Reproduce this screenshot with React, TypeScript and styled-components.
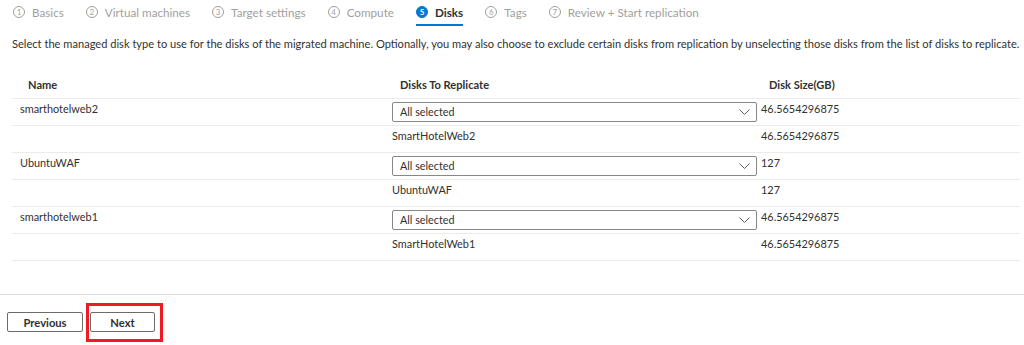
import styled, { createGlobalStyle } from "styled-components";

const GlobalStyle = createGlobalStyle`
    body {
        margin:0;
        background:#fff;
        font-family: Lato, "Open Sans", sans-serif;
        color:#323130;
    }
`;

const Page = styled.div`
    width:1024px;
    height:345px;
    display:flex;
    flex-direction:column;
    overflow:hidden;
`;

const Tabs = styled.div`
    display:flex;
    align-items:stretch;
    gap:22px;
    padding-left:13px;
    height:26px;
`;

const Tab = styled.div<{ $active?: boolean }>`
    display:flex;
    align-items:center;
    gap:7px;
    font-size:11.7px;
    color:${p => p.$active ? "#323130" : "#a19f9d"};
    font-weight:${p => p.$active ? 700 : 400};
    border-bottom:2px solid ${p => p.$active ? "#0078d4" : "transparent"};
`;

const StepNum = styled.span<{ $active?: boolean }>`
    width:12px;
    height:12px;
    box-sizing:border-box;
    border-radius:50%;
    border:1px solid ${p => p.$active ? "#0078d4" : "#a19f9d"};
    background:${p => p.$active ? "#0078d4" : "transparent"};
    color:${p => p.$active ? "#fff" : "#a19f9d"};
    font-size:8px;
    font-weight:${p => p.$active ? 700 : 400};
    display:flex;
    align-items:center;
    justify-content:center;
    line-height:1;
`;

const Description = styled.p`
    margin:10px 0 0 12px;
    font-size:11.1px;
    line-height:16px;
    white-space:nowrap;
`;

const Table = styled.div`
    margin:18px 4px 0 12px;
    display:grid;
    grid-template-columns:372px 369px 1fr;
`;

const HeadCell = styled.div`
    height:28px;
    display:flex;
    align-items:center;
    padding-left:16px;
    font-size:11.1px;
    font-weight:700;
    border-bottom:1px solid #edebe9;
`;

const Cell = styled.div`
    box-sizing:content-box;
    padding:2px 0 0 8px;
    height:24px;
    font-size:10.9px;
    line-height:16px;
    border-bottom:1px solid #edebe9;
`;

const Dropdown = styled.div`
    margin-top:1px;
    height:20px;
    box-sizing:border-box;
    width:365px;
    border:1px solid #8a8886;
    border-radius:2px;
    display:flex;
    align-items:center;
    justify-content:space-between;
    padding:0 6px 0 7px;
    font-size:10.8px;
`;

const Footer = styled.div`
    margin-top:33px;
    border-top:1px solid #e1dfdd;
    padding:17px 0 0 7px;
    display:flex;
    gap:7px;
    position:relative;
`;

const Button = styled.button<{ $w: number }>`
    width:${p => p.$w}px;
    height:20px;
    box-sizing:border-box;
    border:1px solid #6d6b69;
    border-radius:2px;
    background:#fff;
    font-family:inherit;
    font-size:11.2px;
    font-weight:700;
    color:#323130;
    padding:0;
`;

const Highlight = styled.div`
    position:absolute;
    left:86px;
    top:8px;
    width:77px;
    height:39px;
    box-sizing:border-box;
    border:3px solid #ed1c24;
`;

const steps = ["Basics", "Virtual machines", "Target settings", "Compute", "Disks", "Tags", "Review + Start replication"];

const machines = [
    { name: "smarthotelweb2", disk: "SmartHotelWeb2", size: "46.5654296875" },
    { name: "UbuntuWAF", disk: "UbuntuWAF", size: "127" },
    { name: "smarthotelweb1", disk: "SmartHotelWeb1", size: "46.5654296875" },
];

function Chevron() {
    return (
        <svg width="11" height="6" viewBox="0 0 11 6">
            <path d="M0.5 0.5 L5.5 5.5 L10.5 0.5" fill="none" stroke="#605e5c" strokeWidth="1" />
        </svg>
    );
}

export default function App() {
    return (
        <Page>
            <GlobalStyle />
            <Tabs>
                {steps.map((s, i) => (
                    <Tab key={s} $active={i === 4}>
                        <StepNum $active={i === 4}>{i + 1}</StepNum>
                        {s}
                    </Tab>
                ))}
            </Tabs>
            <Description>
                Select the managed disk type to use for the disks of the migrated machine. Optionally, you may also choose to exclude certain disks from replication by unselecting those disks from the list of disks to replicate.
            </Description>
            <Table>
                <HeadCell>Name</HeadCell>
                <HeadCell>Disks To Replicate</HeadCell>
                <HeadCell>Disk Size(GB)</HeadCell>
                {machines.map(m => (
                    <>
                        <Cell key={m.name}>{m.name}</Cell>
                        <Cell>
                            <Dropdown>All selected<Chevron /></Dropdown>
                        </Cell>
                        <Cell>{m.size}</Cell>
                        <Cell />
                        <Cell>{m.disk}</Cell>
                        <Cell>{m.size}</Cell>
                    </>
                ))}
            </Table>
            <Footer>
                <Button $w={76}>Previous</Button>
                <Button $w={65}>Next</Button>
                <Highlight />
            </Footer>
        </Page>
    );
}
